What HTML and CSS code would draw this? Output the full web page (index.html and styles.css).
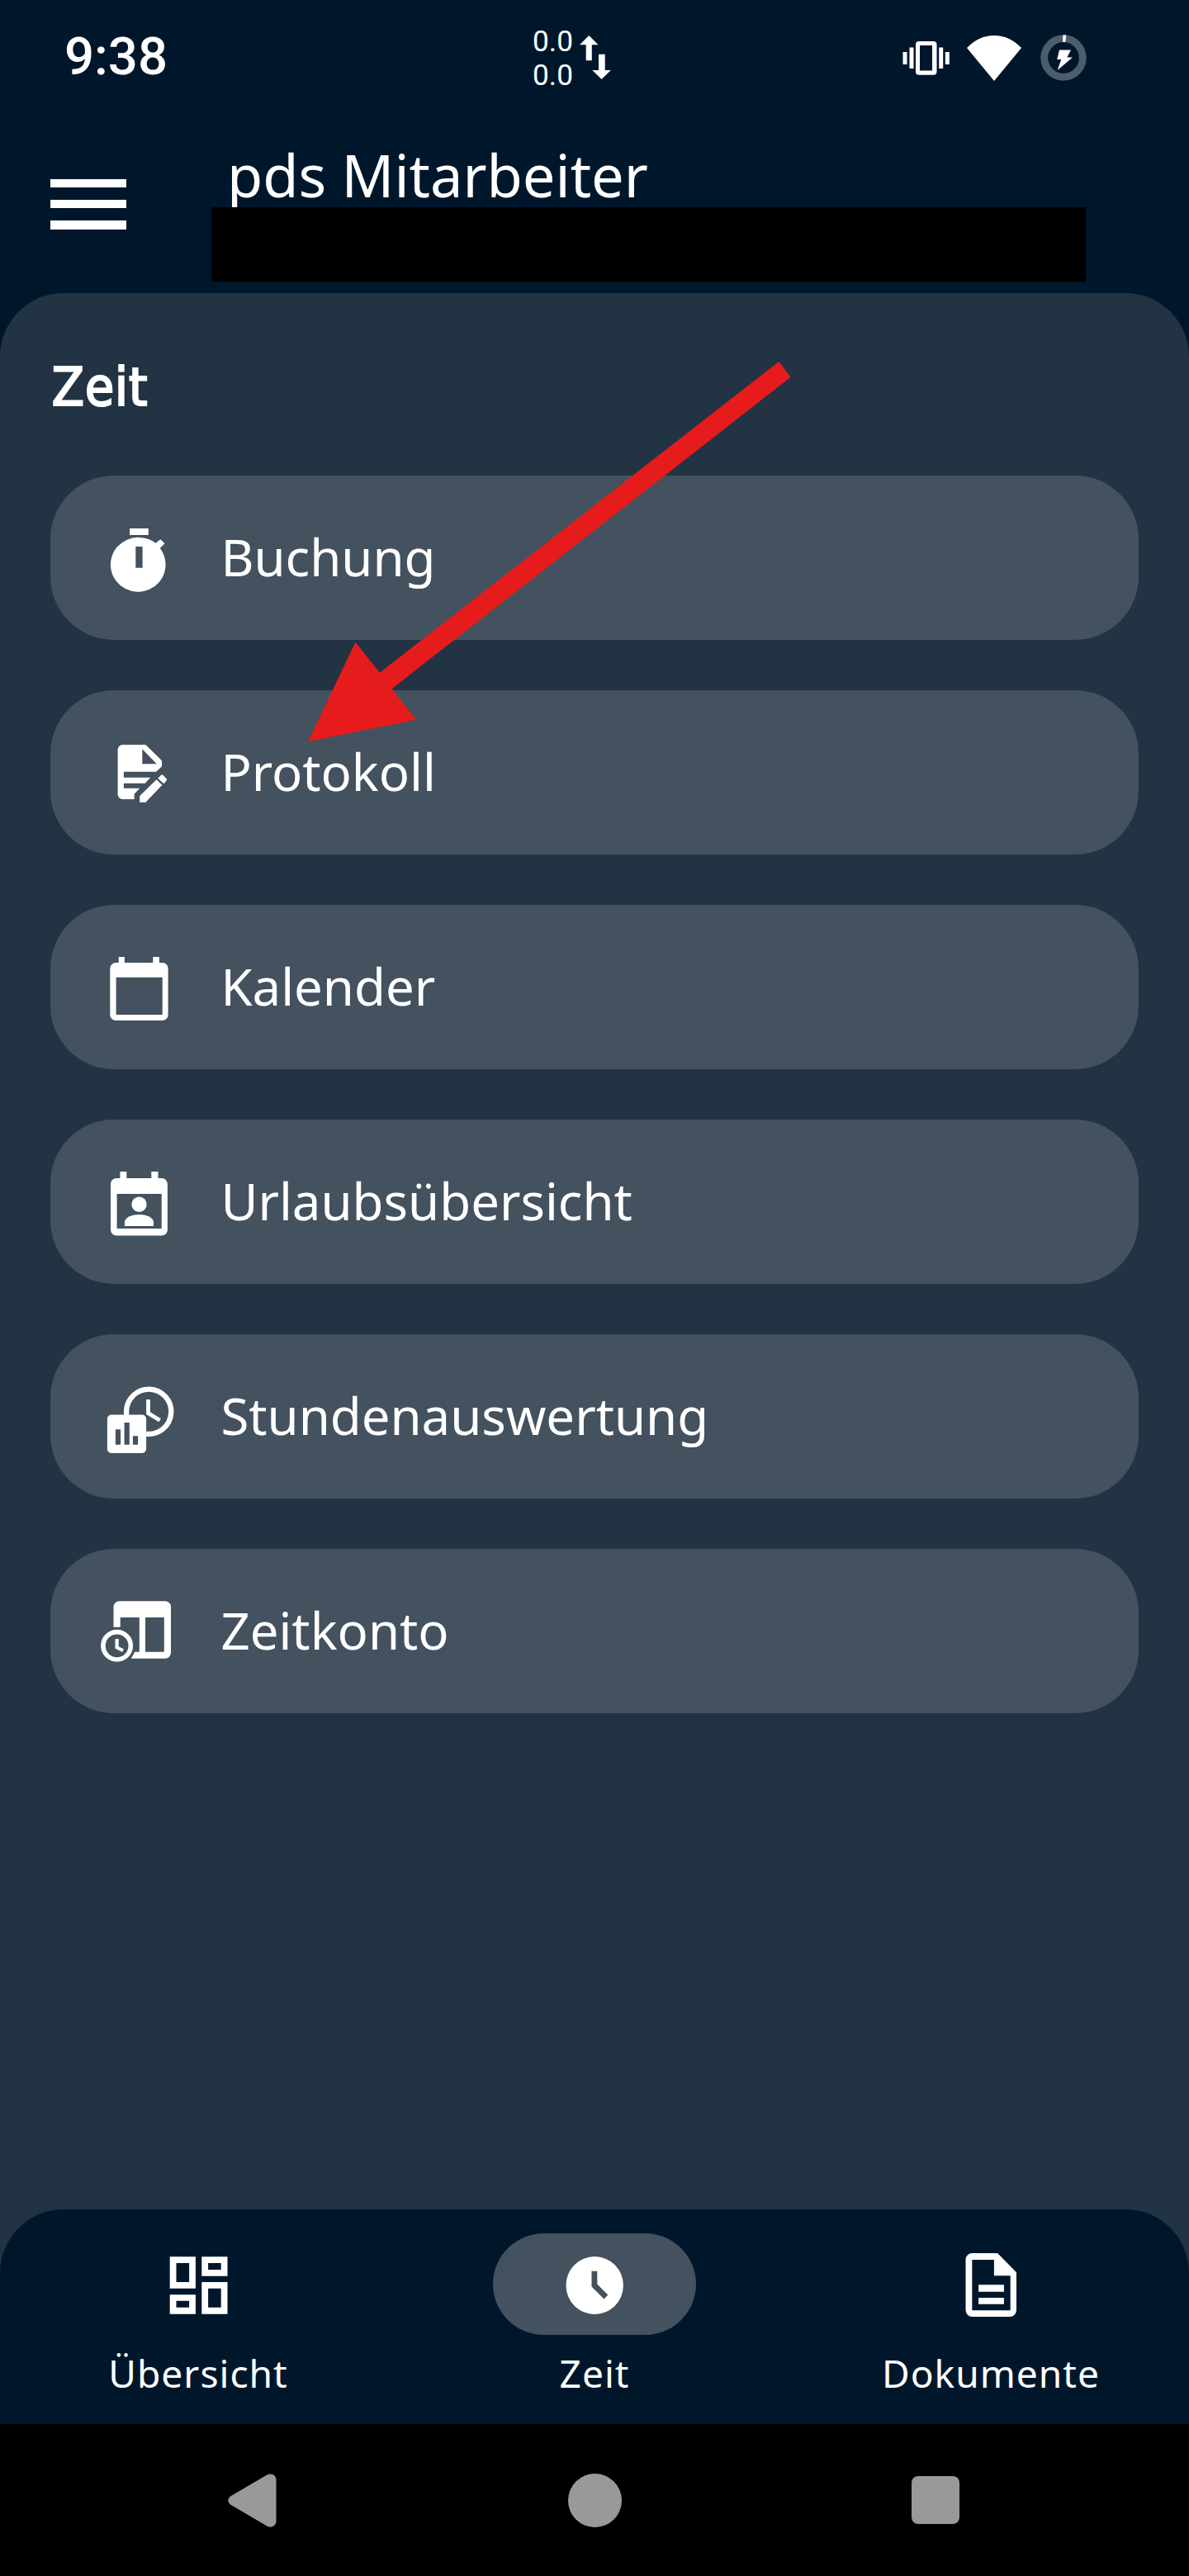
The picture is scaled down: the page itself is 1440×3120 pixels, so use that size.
FILE: index.html
```html
<!DOCTYPE html>
<html lang="de">
<head>
<meta charset="utf-8">
<title>pds Mitarbeiter</title>
<link rel="stylesheet" href="styles.css">
</head>
<body>
<div class="screen">
  <div class="statusbar">
    <div class="clock">9:38</div>
    <div class="traffic">
      <div class="rates"><div>0.0</div><div>0.0</div></div>
      <svg class="traffic-icon" viewBox="0 0 38 53"><path d="M11.3 0 22.5 11.3h-7.7v19H7.7v-19H0zM23 22.800h7.700V42h7.100L26.600 53 15.300 42H23z"/></svg>
    </div>
    <div class="indicators">
      <svg class="vibrate-icon" viewBox="0 0 58 42"><path d="M.5 14h5v15h-5zM8.500 8.500h5v25.500h-5zM44.200 8.500h5v25.500h-5zM51.800 14h5v15h-5z"/><path fill-rule="evenodd" d="M20 1h17.500a4 4 0 0 1 4 4v32.700a4 4 0 0 1-4 4H20a4 4 0 0 1-4-4V5a4 4 0 0 1 4-4zM21 6v30.500h15V6z"/></svg>
      <svg class="wifi-icon" viewBox="0 0 66 55"><path d="M33 55 0 15Q14.500 0 33 0t33 15z"/></svg>
      <svg class="battery-icon" viewBox="0 0 56 56"><circle cx="28" cy="28" r="23.300" fill="none" stroke="#4e5d6b" stroke-width="8.800"/><path d="M27.300.5h4L30.300 9h-3zM23 18.500h14l-4.700 9h6.700L20.700 43l4.500-13h-5z"/></svg>
    </div>
  </div>

  <header class="appbar">
    <div class="menu-button"><span></span><span></span><span></span></div>
    <div class="titles">
      <h1 class="app-title">pds Mitarbeiter</h1>
      <div class="user-name"></div>
    </div>
  </header>

  <main class="panel">
    <h2 class="section-title">Zeit</h2>
    <div class="cards">
      <a class="card"><svg class="icon" viewBox="0 0 96 96"><path d="M37.100 10h22.700v8H37.100z"/><path fill-rule="evenodd" d="M48.500 20.900a33.300 33 0 0 1 20 6.800L74.300 23.300l5.200 5-5.700 5.700a33.300 33 0 1 1-25.300-13.100zM44.300 32v25.700h8.300V32z"/></svg><span class="label">Buchung</span></a>
      <a class="card"><svg class="icon" viewBox="0 0 96 96"><path fill-rule="evenodd" d="M28.600 12h27.800L76 31.300v7l-6.900 6.400H29.900v7h32.300l-6.500 7H29.900v6h19.300l-6.600 7V78h-14a6 6 0 0 1-6-6V18a6 6 0 0 1 6-6zM52.300 17.300v18h17.500z"/><path d="M49.200 81.700V74l20.300-19.700 6.900 6.400-20 21zM71.200 52.700l3.800-4q1.200-1 2.400 0l4.300 4.600q.9 1 0 2l-3.300 4z"/></svg><span class="label">Protokoll</span></a>
      <a class="card"><svg class="icon" viewBox="0 0 96 96"><path fill-rule="evenodd" d="M23.700 9h7.200v7h34.400V9h7.600v7h3.700a7 7 0 0 1 7 7v56a7 7 0 0 1-7 7H20.300a7 7 0 0 1-7-7V23a7 7 0 0 1 7-7h3.400zM20.600 33.700V79h56.100V33.700z"/></svg><span class="label">Kalender</span></a>
      <a class="card"><svg class="icon" viewBox="0 0 96 96"><path fill-rule="evenodd" d="M25.400 9h7.900v8h30V9h8.200v8h4.400a7 7 0 0 1 7 7v55.500a7 7 0 0 1-7 7H21a7 7 0 0 1-7-7V24a7 7 0 0 1 7-7h4.400zM21.600 36v42h54.100V36z"/><circle cx="48.500" cy="48.700" r="9.200"/><path d="M30.900 75v-4.500C31 64 41 61 48.500 61S66 64 66 70.500V75z"/></svg><span class="label">Urlaubsübersicht</span></a>
      <a class="card"><svg class="icon" viewBox="0 0 96 96"><path fill="none" stroke="#fff" stroke-width="6.300" d="M33.100 45V39.700a27.100 27.100 0 1 1 24 26.900"/><path d="M57.100 25h4.800v15.300l13.100 8-2.600 4L57.100 43z"/><path fill-rule="evenodd" d="M14.900 43.500h37.200a5 5 0 0 1 5 5V85a5 5 0 0 1-5 5H14.900a5 5 0 0 1-5-5V48.500a5 5 0 0 1 5-5zM19.900 61.300v18.400h6.200V61.300zM30.600 53v26.700h6.200V53zM40.900 69.300v10.400h6.200V69.300z"/></svg><span class="label">Stundenauswertung</span></a>
      <a class="card"><svg class="icon" viewBox="0 0 96 96"><path fill-rule="evenodd" d="M24.500 9.300H80a7 7 0 0 1 7 7v55.400a7 7 0 0 1-7 7H38.800l4.500-8h5.500V29H25.700v11.700h-8.200V16.300a7 7 0 0 1 7-7zM56 29v41.700h22.800V29z"/><circle cx="21.600" cy="63.300" r="16.700" fill="none" stroke="#fff" stroke-width="5.600"/><path d="M19.500 55h4.200v9.300l6.200 3-1.700 3.700-8.700-4.500z"/></svg><span class="label">Zeitkonto</span></a>
    </div>
  </main>

  <nav class="tabs">
    <a class="tab"><span class="pill"><svg class="icon" viewBox="0 0 96 96"><path fill-rule="evenodd" d="M13.700 15.300h31.200v38.400H13.700zM21.500 23v23h15.600V23zM13.700 61.300h31.200v23.400H13.700zM21.500 68.700v8h15.600v-8zM52.300 15.300h31.200v23.400H52.300zM60.100 23v8h15.600v-8zM52.300 46h31.200v38.700H52.300zM60.100 53.700v23h15.600v-23z"/></svg></span><span class="tab-label">Übersicht</span></a>
    <a class="tab"><span class="pill pill-active"><svg class="icon" viewBox="0 0 96 96"><path fill-rule="evenodd" d="M48.200 15a34.700 35 0 1 1 0 70 34.700 35 0 0 1 0-70zM44.500 32.700v18.700l15 15.100 4.800-5L51.300 48.600V32.700z"/></svg></span><span class="tab-label">Zeit</span></a>
    <a class="tab"><span class="pill"><svg class="icon" viewBox="0 0 96 96"><path fill-rule="evenodd" d="M25.500 11h30.600L79 34.300V80a8 8 0 0 1-8 8H25.500a8 8 0 0 1-8-8V19a8 8 0 0 1 8-8zM25.300 19v61.300h46.400v-42H51.900V19z"/><path d="M33.100 49.300h30.800v8.400H33.100zM33.100 65h30.800v7.700H33.100z"/></svg></span><span class="tab-label">Dokumente</span></a>
  </nav>

  <div class="sysnav">
    <svg class="sys-back" viewBox="0 0 59 65"><path d="M3 27.500 46.500 2C52-1.500 58.500 1 58.500 8v49c0 7-6.500 9.500-12 6L3 37.500q-5.500-5 0-10z"/></svg>
    <div class="sys-home"></div>
    <div class="sys-recent"></div>
  </div>

  <svg class="pointer" viewBox="0 0 586 461"><path d="M0 460.200 57.500 339.800l29.300 37L570.300 0l14.300 18.800L101.600 396.200l29.200 37.600z"/></svg>
</div>
</body>
</html>
```
FILE: styles.css
```css
* {
  box-sizing: border-box;
}

body {
  margin: 0;
  background: #00172b;
  color: #fff;
  font-family: "Noto Sans", sans-serif;
}

svg {
  display: block;
  fill: #fff;
  flex: none;
}

.screen {
  position: relative;
  display: flex;
  flex-direction: column;
  width: 1440px;
  height: 3120px;
  overflow: hidden;
}

.statusbar {
  display: grid;
  grid-template-columns: 645px 448px 1fr;
  height: 140px;
  font-family: Roboto, sans-serif;
}

.clock {
  padding: 32px 0 0 78px;
  font-size: 63.500px;
  font-weight: 500;
  line-height: 74px;
}

.traffic {
  display: flex;
  gap: 8px;
  padding-top: 30px;
  font-size: 35.300px;
  line-height: 41px;
}

.traffic-icon {
  width: 38px;
  height: 53px;
  margin-top: 13px;
}

.indicators {
  display: flex;
  align-items: center;
  height: 140px;
}

.vibrate-icon {
  width: 58px;
  height: 42px;
}

.wifi-icon {
  width: 66px;
  height: 55px;
  margin-left: 20px;
}

.battery-icon {
  width: 56px;
  height: 56px;
  margin-left: 22.500px;
}

.appbar {
  display: flex;
  height: 214.500px;
  padding-left: 61.400px;
}

.menu-button {
  display: flex;
  flex-direction: column;
  gap: 15.300px;
  width: 92px;
  margin-top: 76.500px;
}

.menu-button span {
  height: 10.200px;
  background: #fff;
}

.titles {
  width: 1059px;
  margin-left: 102.600px;
  padding-top: 24px;
}

.app-title {
  margin: 0 0 0 19px;
  font-size: 70.400px;
  font-weight: 400;
  line-height: 96px;
}

.user-name {
  position: relative;
  height: 90px;
  margin-top: -9px;
  background: #000;
}

.panel {
  flex: 1;
  margin-bottom: -76px;
  padding: 68.500px 61.400px 0;
  border-radius: 76.800px 76.800px 0 0;
  background: #223343;
}

.section-title {
  height: 153px;
  margin: 0;
  padding-left: 1.400px;
  font-family: "DejaVu Sans Condensed", "DejaVu Sans", sans-serif;
  font-size: 63.500px;
  font-weight: 400;
  line-height: 92px;
  letter-spacing: 1px;
  -webkit-text-stroke: 2.200px #fff;
}

.cards {
  display: flex;
  flex-direction: column;
  gap: 61.400px;
}

.card {
  display: flex;
  align-items: center;
  gap: 51.400px;
  height: 198.700px;
  padding-left: 58.600px;
  border-radius: 76.800px;
  background: #44515e;
}

.icon {
  width: 96px;
  height: 96px;
}

.card .icon {
  margin-top: 5px;
}

.label {
  margin-bottom: 2.600px;
  font-size: 61.700px;
  line-height: 84px;
}

.tabs {
  position: relative;
  display: grid;
  grid-template-columns: repeat(3, 1fr);
  height: 260.500px;
  padding-top: 29.500px;
  border-radius: 76.800px 76.800px 0 0;
  background: #00172b;
}

.tab {
  display: flex;
  flex-direction: column;
  align-items: center;
  gap: 15.200px;
}

.pill {
  display: flex;
  justify-content: center;
  width: 245.500px;
  height: 122.500px;
  padding-top: 13px;
  border-radius: 61.500px;
}

.pill-active {
  background: #44515e;
}

.tab-label {
  font-size: 46.080px;
  line-height: 63px;
  letter-spacing: 1.030px;
}

.sysnav {
  display: flex;
  align-items: center;
  height: 184px;
  padding-left: 276px;
  background: #000;
}

.sys-back {
  width: 59px;
  height: 65px;
  fill: #999;
}

.sys-home {
  width: 65px;
  height: 65px;
  margin-left: 353px;
  border-radius: 50%;
  background: #999;
}

.sys-recent {
  width: 58px;
  height: 58px;
  margin-left: 351px;
  border-radius: 8px;
  background: #999;
}

/* Hint arrow drawn over the menu */
.pointer {
  position: absolute;
  left: 372.700px;
  top: 437.500px;
  width: 586px;
  height: 461px;
  fill: #e61c1c;
}
```
